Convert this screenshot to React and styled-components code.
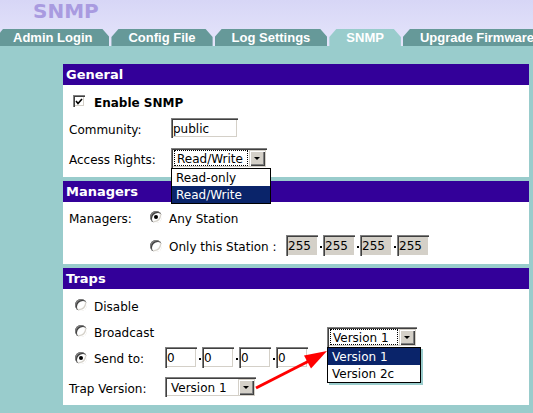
import React from "react";
import styled, { createGlobalStyle, css } from "styled-components";

const GlobalStyle = createGlobalStyle`
  html, body {
    margin: 0;
    padding: 0;
  }
  body {
    width: 533px;
    height: 413px;
    overflow: hidden;
    background: #99cccc;
    font-family: "DejaVu Sans", Verdana, sans-serif;
    font-size: 12px;
    color: #000;
  }
`;

const sunken = css`
  box-shadow: inset 1px 1px #808080, inset 2px 2px #404040,
    inset -1px -1px #ffffff, inset -2px -2px #d4d0c8;
`;

const Top = styled.div`
  background: linear-gradient(#d7d6f6, #e5e5fb);
  overflow: hidden;
`;

const Title = styled.h1`
  margin: 0;
  height: 29px;
  box-sizing: border-box;
  padding: 1px 0 0 33px;
  font: bold 20px/20px "DejaVu Sans", Verdana, sans-serif;
  color: #a99be0;
`;

const TabBar = styled.div`
  display: flex;
  gap: 2px;
  margin-left: -4px;
  height: 17px;
  white-space: nowrap;
`;

const Tab = styled.div`
  flex: none;
  height: 17px;
  padding: 0 17px;
  background: ${(p) => (p.$active ? "#99cccc" : "#669999")};
  color: #fff;
  font: bold 13px/18px "Liberation Sans", Arial, sans-serif;
  clip-path: polygon(0 8px, 7px 0, calc(100% - 7px) 0, 100% 8px, 100% 100%, 0 100%);
`;

const Content = styled.div`
  display: flex;
  flex-direction: column;
  gap: 4px;
  padding: 18px 4px 0 63px;
`;

const Panel = styled.section`
  background: #fff;
`;

const PanelTitle = styled.div`
  height: 21px;
  padding-left: 3px;
  background: #330099;
  color: #fff;
  font: bold 13px/21px "DejaVu Sans", Verdana, sans-serif;
`;

const PanelBody = styled.div`
  position: relative;
  padding: ${(p) => p.$pad};
`;

const Row = styled.div`
  display: flex;
  align-items: center;
  height: ${(p) => p.$h}px;
  margin-top: ${(p) => p.$mt || 0}px;
  padding-left: ${(p) => p.$indent || 0}px;
  white-space: nowrap;
`;

/* captions sit a little under the middle of their row */
const Text = styled.span`
  flex: none;
  padding-top: 3px;
  font-weight: ${(p) => (p.$bold ? "bold" : "normal")};
`;

const Label = styled(Text)`
  width: ${(p) => p.$w}px;
`;

const CheckBox = styled.span`
  flex: none;
  display: flex;
  align-items: center;
  justify-content: center;
  width: 12px;
  height: 12px;
  margin-right: 9px;
  background: #fff;
  ${sunken}
`;

const Radio = styled.span`
  position: relative;
  flex: none;
  width: 12px;
  height: 12px;
  margin-right: 7px;
  border-radius: 50%;
  background: #fff;
  box-shadow: inset 1px 1px #808080, inset 2px 2px #404040,
    inset -1px -1px #ffffff, inset -2px -2px #d4d0c8;
  ${(p) =>
    p.$on &&
    css`
      &::after {
        content: "";
        position: absolute;
        left: 4px;
        top: 4px;
        width: 4px;
        height: 4px;
        border-radius: 50%;
        background: #000;
      }
    `}
`;

const Field = styled.input`
  flex: none;
  box-sizing: border-box;
  width: ${(p) => p.$w}px;
  height: ${(p) => p.$h || 20}px;
  margin: 0;
  padding: 1px 0 0 2px;
  border: none;
  outline: none;
  font: 12px "DejaVu Sans", Verdana, sans-serif;
  color: #000;
  background: ${(p) => (p.$off ? "#d4d0c8" : "#fff")};
  ${sunken}
`;

const IpRow = styled.div`
  display: flex;
  align-items: center;
`;

const Dot = styled.span`
  flex: none;
  display: flex;
  justify-content: center;
  width: 5px;
  padding-top: 3px;
  &::before {
    content: "";
    width: 2px;
    height: 2px;
    background: #000;
  }
`;

const SelectBox = styled.div`
  position: relative;
  flex: none;
  display: flex;
  box-sizing: border-box;
  width: ${(p) => p.$w}px;
  height: 20px;
  padding: 2px;
  background: #fff;
  ${sunken}
`;

const SelectValue = styled.span`
  flex: 1;
  display: flex;
  align-items: center;
  margin: 0 1px;
  padding: 1px 0 0 2px;
  border: 1px dotted ${(p) => (p.$focus ? "#000" : "transparent")};
`;

const SelectButton = styled.span`
  flex: none;
  display: flex;
  align-items: center;
  justify-content: center;
  width: 16px;
  height: 16px;
  background: #d4d0c8;
  box-shadow: inset 1px 1px #d4d0c8, inset 2px 2px #ffffff,
    inset -1px -1px #404040, inset -2px -2px #808080;
  &::after {
    content: "";
    margin-top: 1px;
    border-left: 3px solid transparent;
    border-right: 3px solid transparent;
    border-top: 3px solid #000;
  }
`;

const OptionList = styled.div`
  position: absolute;
  left: 0;
  top: 100%;
  z-index: 2;
  width: ${(p) => p.$w}px;
  box-sizing: border-box;
  border: 1px solid #000;
  background: #fff;
  box-shadow: ${(p) => (p.$shadow ? "2px 2px 0 #99cccc" : "none")};
`;

const Option = styled.div`
  height: 17px;
  line-height: 18px;
  padding-left: 4px;
  background: ${(p) => (p.$sel ? "#0a246a" : "#fff")};
  color: ${(p) => (p.$sel ? "#fff" : "#000")};
`;

const Callout = styled.div`
  position: absolute;
  left: ${(p) => p.$x}px;
  top: ${(p) => p.$y}px;
  z-index: 2;
`;

const Arrow = styled.svg`
  position: absolute;
  left: 0;
  top: 0;
  z-index: 3;
  overflow: visible;
  pointer-events: none;
`;

const Select = ({ width, value, focus, options, listWidth, shadow }) => (
  <SelectBox $w={width}>
    <SelectValue $focus={focus}>{value}</SelectValue>
    <SelectButton />
    {options && (
      <OptionList $w={listWidth} $shadow={shadow}>
        {options.map((o) => (
          <Option key={o} $sel={o === value}>
            {o}
          </Option>
        ))}
      </OptionList>
    )}
  </SelectBox>
);

const IpAddress = ({ parts, off }) => (
  <IpRow>
    {parts.map((v, i) => (
      <React.Fragment key={i}>
        {i > 0 && <Dot />}
        <Field $w={32} $h={21} $off={off} readOnly value={v} />
      </React.Fragment>
    ))}
  </IpRow>
);

const tabs = ["Admin Login", "Config File", "Log Settings", "SNMP", "Upgrade Firmware"];

export default function App() {
  return (
    <>
      <GlobalStyle />
      <Top>
        <Title>SNMP</Title>
        <TabBar>
          {tabs.map((t) => (
            <Tab key={t} $active={t === "SNMP"}>
              {t}
            </Tab>
          ))}
        </TabBar>
      </Top>

      <Content>
        <Panel>
          <PanelTitle>General</PanelTitle>
          <PanelBody $pad="6px 0 9px 6px">
            <Row $h={20} $indent={4}>
              <CheckBox>
                <svg width="8" height="7" viewBox="0 0 8 7">
                  <polyline points="1,3 3,5.5 7,1" fill="none" stroke="#000" strokeWidth="1.6" />
                </svg>
              </CheckBox>
              <Text $bold>Enable SNMP</Text>
            </Row>
            <Row $h={20} $mt={7}>
              <Label $w={102}>Community:</Label>
              <Field $w={67} readOnly value="public" />
            </Row>
            <Row $h={20} $mt={10}>
              <Label $w={102}>Access Rights:</Label>
              <Select
                width={96}
                value="Read/Write"
                focus
                options={["Read-only", "Read/Write"]}
                listWidth={100}
              />
            </Row>
          </PanelBody>
        </Panel>

        <Panel>
          <PanelTitle>Managers</PanelTitle>
          <PanelBody $pad="6px 0 8px 6px">
            <Row $h={18}>
              <Label $w={81}>Managers:</Label>
              <Radio $on />
              <Text>Any Station</Text>
            </Row>
            <Row $h={21} $mt={9} $indent={81}>
              <Radio />
              <Label $w={117}>Only this Station :</Label>
              <IpAddress parts={["255", "255", "255", "255"]} off />
            </Row>
          </PanelBody>
        </Panel>

        <Panel>
          <PanelTitle>Traps</PanelTitle>
          <PanelBody $pad="6px 0 8px 6px">
            <Row $h={20} $indent={6}>
              <Radio />
              <Text>Disable</Text>
            </Row>
            <Row $h={20} $mt={6} $indent={6}>
              <Radio />
              <Text>Broadcast</Text>
            </Row>
            <Row $h={21} $mt={6} $indent={6}>
              <Radio $on />
              <Label $w={71}>Send to:</Label>
              <IpAddress parts={["0", "0", "0", "0"]} />
            </Row>
            <Row $h={20} $mt={9}>
              <Label $w={96}>Trap Version:</Label>
              <Select width={91} value="Version 1" />
            </Row>

            <Callout $x={264} $y={38}>
              <Select
                width={90}
                value="Version 1"
                focus
                options={["Version 1", "Version 2c"]}
                listWidth={94}
                shadow
              />
            </Callout>

            <Arrow width="300" height="110">
              <line x1="193" y1="99" x2="245" y2="72.5" stroke="#ff0000" strokeWidth="3" />
              <polygon points="264,62 241,66.5 248,79.5" fill="#ff0000" />
            </Arrow>
          </PanelBody>
        </Panel>
      </Content>
    </>
  );
}
